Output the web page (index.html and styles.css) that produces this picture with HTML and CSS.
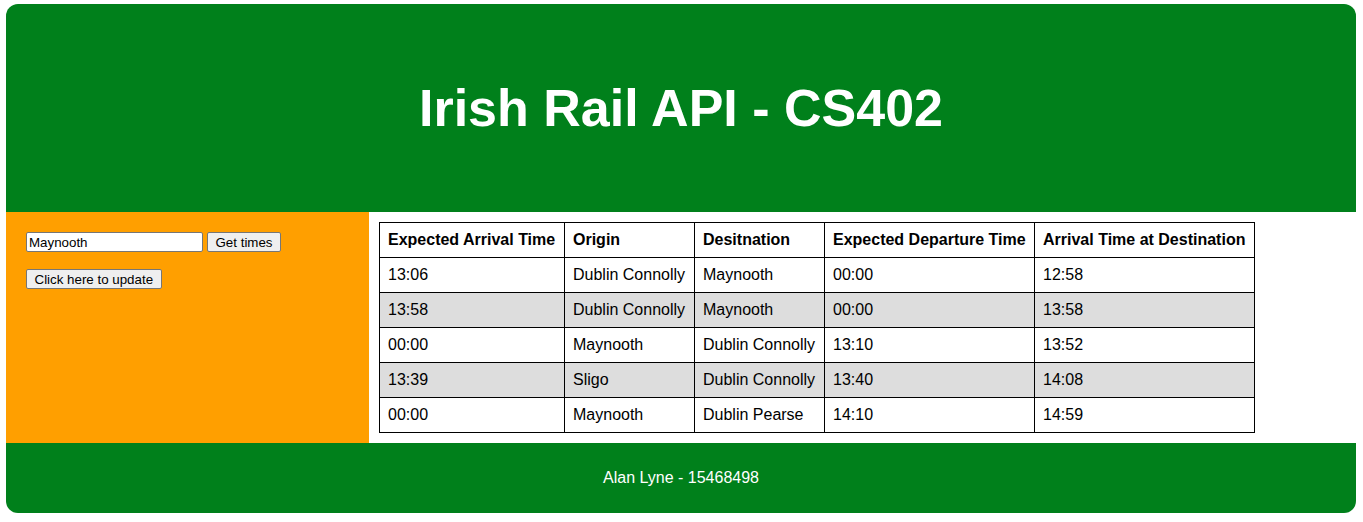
FILE: index.html
```html
<!DOCTYPE html>
<html>
<head>
<meta charset="utf-8">
<title>Irish Rail API - CS402</title>
<link rel="stylesheet" href="styles.css">
</head>
<body>
<div class="page">
  <header class="header">
    <h1 class="title">Irish Rail API - CS402</h1>
  </header>
  <div class="middle">
    <aside class="sidebar">
      <div class="search-row">
        <input class="station-input" type="text" value="Maynooth">
        <button class="btn">Get times</button>
      </div>
      <div class="update-row">
        <button class="btn">Click here to update</button>
      </div>
    </aside>
    <main class="content">
      <table class="times">
        <colgroup>
          <col class="c1"><col class="c2"><col class="c3"><col class="c4"><col class="c5">
        </colgroup>
        <thead>
          <tr>
            <th>Expected Arrival Time</th>
            <th>Origin</th>
            <th>Desitnation</th>
            <th>Expected Departure Time</th>
            <th>Arrival Time at Destination</th>
          </tr>
        </thead>
        <tbody>
          <tr><td>13:06</td><td>Dublin Connolly</td><td>Maynooth</td><td>00:00</td><td>12:58</td></tr>
          <tr><td>13:58</td><td>Dublin Connolly</td><td>Maynooth</td><td>00:00</td><td>13:58</td></tr>
          <tr><td>00:00</td><td>Maynooth</td><td>Dublin Connolly</td><td>13:10</td><td>13:52</td></tr>
          <tr><td>13:39</td><td>Sligo</td><td>Dublin Connolly</td><td>13:40</td><td>14:08</td></tr>
          <tr><td>00:00</td><td>Maynooth</td><td>Dublin Pearse</td><td>14:10</td><td>14:59</td></tr>
        </tbody>
      </table>
    </main>
  </div>
  <footer class="footer">Alan Lyne - 15468498</footer>
</div>
</body>
</html>
```

FILE: styles.css
```css
html, body {
  margin: 0;
  padding: 0;
  background: #ffffff;
}
body {
  padding: 4px 7px 0 6px;
  font-family: "Liberation Sans", Arial, sans-serif;
}
.page {
  width: 1350px;
  border-radius: 12px;
  overflow: hidden;
}
.header {
  background: #00801b;
  height: 208px;
  display: flex;
  align-items: center;
  justify-content: center;
}
.title {
  margin: 0;
  color: #ffffff;
  font-size: 52px;
  font-weight: bold;
  font-family: "Liberation Sans", Arial, sans-serif;
}
.middle {
  display: flex;
  align-items: stretch;
}
.sidebar {
  width: 363px;
  flex: none;
  background: #ff9f00;
  padding: 20px 20px;
  box-sizing: border-box;
}
.search-row {
  display: flex;
  gap: 4px;
  align-items: center;
}
.update-row {
  margin-top: 17px;
}
.station-input {
  width: 177px;
  height: 20px;
  box-sizing: border-box;
  font-family: "Liberation Sans", Arial, sans-serif;
  font-size: 13.33px;
  padding: 1px 2px;
  border: 1px solid #767676;
  border-radius: 2px;
  margin: 0;
}
.btn {
  font-family: "Liberation Sans", Arial, sans-serif;
  font-size: 13.33px;
  height: 20px;
  padding: 1px 7.5px;
  margin: 0;
  background: #efefef;
  border: 1px solid #767676;
  border-radius: 2px;
  color: #000;
}
.content {
  flex: 1;
  background: #ffffff;
  padding: 10px;
}
.times {
  border-collapse: collapse;
  table-layout: fixed;
  width: 875px;
  font-size: 16px;
  color: #000;
}
.times .c1 { width: 185px; }
.times .c2 { width: 130px; }
.times .c3 { width: 130px; }
.times .c4 { width: 210px; }
.times .c5 { width: 220px; }
.times th,
.times td {
  border: 1px solid #000;
  padding: 8px 8px;
  text-align: left;
  white-space: nowrap;
  line-height: 18px;
}
.times th {
  font-weight: bold;
}
.times tbody tr:nth-child(even) {
  background: #dddddd;
}
.footer {
  background: #00801b;
  height: 70px;
  color: #ffffff;
  font-size: 16px;
  display: flex;
  align-items: center;
  justify-content: center;
}
```
